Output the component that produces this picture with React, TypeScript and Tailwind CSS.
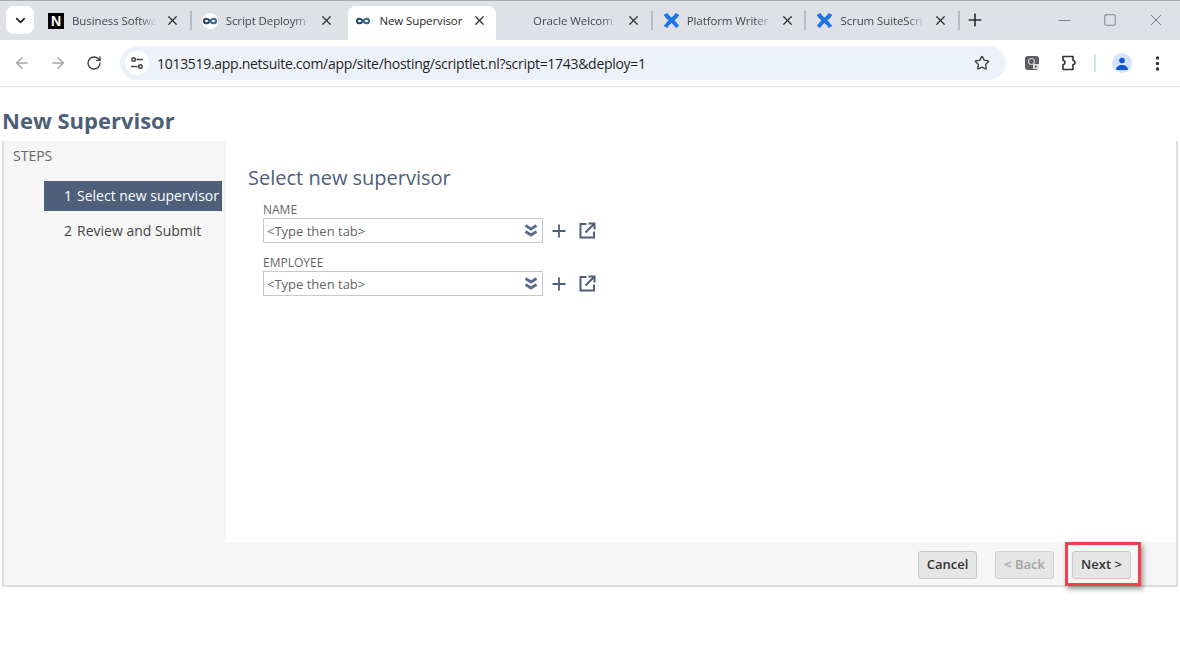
import { ArrowLeft, ArrowRight, ChevronDown, Minus, MoreVertical, Plus, RotateCw, Square, Star, X } from "lucide-react";

const sans = "font-['Open_Sans',sans-serif]";

function NetsuiteIcon() {
  return (
    <svg width="16" height="16" viewBox="0 0 16 16" fill="none">
      <circle cx="8" cy="8" r="8" fill="#fff" />
      <path d="M8 8C6.800 6.400 5.600 5.700 4.400 5.700 3 5.700 2 6.700 2 8s1 2.300 2.400 2.300c1.200 0 2.400-.7 3.600-2.300z" stroke="#28465f" strokeWidth="2.100" />
      <path d="M8 8c1.200-1.600 2.400-2.300 3.600-2.300C13 5.700 14 6.700 14 8s-1 2.300-2.400 2.300C10.400 10.300 9.200 9.600 8 8z" stroke="#3a678a" strokeWidth="2.100" />
    </svg>
  );
}

function ConfluenceIcon() {
  return (
    <svg width="17" height="17" viewBox="0 0 17 17" fill="none" stroke="#1d74e6" strokeWidth="4">
      <path d="M2.500 2C5 7 10.500 8.500 14.500 15" />
      <path d="M14.500 2C12 7 6.500 8.500 2.500 15" />
    </svg>
  );
}

function NotionIcon() {
  return (
    <div className="flex h-4 w-4 items-center justify-center bg-black font-['Liberation_Sans',sans-serif] text-[14px] font-bold leading-none text-white">
      N
    </div>
  );
}

const tabs = [
  { title: "Business Softwa", icon: <NotionIcon /> },
  { title: "Script Deploym", icon: <NetsuiteIcon /> },
  { title: "New Supervisor", icon: <NetsuiteIcon />, active: true },
  { title: "Oracle Welcom", icon: <div className="h-4 w-4" /> },
  { title: "Platform Writer", icon: <ConfluenceIcon /> },
  { title: "Scrum SuiteScri", icon: <ConfluenceIcon /> },
];

function TabStrip() {
  return (
    <div className="flex h-10 shrink-0 items-end border-t border-t-[#a9abad] bg-[#dee1e6] pl-[6px]">
      <div className="mb-[6px] mr-1 flex h-7 w-7 items-center justify-center rounded-lg bg-white">
        <ChevronDown size={15} strokeWidth={2.6} className="text-[#1f1f1f]" />
      </div>
      {tabs.map((tab, i) => (
        <div key={tab.title} className="relative flex h-[34px] w-[153.7px] items-center pb-[5px]">
          {tab.active && <div className="absolute inset-y-0 left-[3px] right-[3px] rounded-t-lg bg-white" />}
          <div className="relative ml-[10px] flex w-[17px] shrink-0 items-center">{tab.icon}</div>
          <div
            className={`relative ml-[7px] w-[85px] whitespace-nowrap ${sans} text-[11.5px] tracking-[-0.1px] ${
              tab.active ? "text-[#1f1f1f]" : "text-[#45474a] [mask-image:linear-gradient(90deg,#000_80%,transparent)]"
            }`}
          >
            {tab.title}
          </div>
          <X size={15} strokeWidth={2} className="relative ml-[8px] shrink-0 text-[#303134]" />
          {!tab.active && i !== 1 && <div className="absolute right-0 top-[5px] h-[19px] w-[2px] bg-[#b9bcc1]" />}
        </div>
      ))}
      <div className="mb-[6px] ml-px flex h-7 w-7 items-center justify-center">
        <Plus size={20} strokeWidth={2} className="text-[#303134]" />
      </div>
      <div className="mb-[6px] ml-[66px] flex h-7 items-center gap-[29px] text-[#6f7175]">
        <Minus size={19} strokeWidth={1.1} />
        <Square size={14} strokeWidth={1.4} />
        <X size={20} strokeWidth={1.1} />
      </div>
    </div>
  );
}

function Toolbar() {
  return (
    <div className="flex h-[47px] shrink-0 items-center border-b border-[#dcdcdc] bg-white pl-[13px]">
      <ArrowLeft size={18} strokeWidth={1.8} className="text-[#a6a7a9]" />
      <ArrowRight size={18} strokeWidth={1.8} className="ml-[18px] text-[#a6a7a9]" />
      <RotateCw size={16} strokeWidth={2} className="ml-[19px] text-[#3c3e41]" />
      <div className="ml-[18px] flex h-[34px] w-[886px] items-center rounded-full bg-[#edf2fa] pl-[5px]">
        <div className="flex h-6 w-6 items-center justify-center rounded-full bg-white">
          <svg width="14" height="14" viewBox="0 0 14 14" fill="none" stroke="#3c3e41" strokeWidth="1.4">
            <circle cx="3.600" cy="3.500" r="1.800" />
            <path d="M6.500 3.500h6.500" />
            <circle cx="10.400" cy="10.500" r="1.800" />
            <path d="M1 10.500h6.500" />
          </svg>
        </div>
        <div className={`ml-2 flex-1 ${sans} text-[14px] tracking-[-0.295px] text-[#1f1f1f]`}>
          1013519.app.netsuite.com/app/site/hosting/scriptlet.nl?script=1743&amp;deploy=1
        </div>
        <Star size={16} strokeWidth={2} className="mr-4 text-[#3c3e41]" />
      </div>
      <svg width="16" height="16" viewBox="0 0 16 16" className="ml-[18px]">
        <rect x="1" y="1" width="14" height="14" rx="3" fill="#5b5d60" />
        <circle cx="7.500" cy="6.500" r="3" fill="none" stroke="#c9c9c9" strokeWidth="1.200" />
        <rect x="9" y="9" width="6" height="5" fill="#e4e4e4" />
        <path d="M11 10l2.500 1.500L11 13z" fill="#5b5d60" />
      </svg>
      <svg width="18" height="18" viewBox="0 0 18 18" fill="none" stroke="#303134" strokeWidth="1.600" className="ml-[20px]">
        <path d="M3 2.500H13V6.500a2 2 0 0 1 0 4V15.500H3V10.500a2 2 0 0 0 0-4z" strokeLinejoin="round" />
      </svg>
      <div className="ml-[16px] h-[18px] w-[2px] bg-[#d3e3fd]" />
      <div className="ml-[16px] flex h-5 w-5 items-center justify-center rounded-full bg-[#d3e3fd]">
        <svg width="12" height="13" viewBox="0 0 12 13" fill="#0b57d0">
          <circle cx="6" cy="3.500" r="2.800" />
          <path d="M0 13c0-3 2.500-5 6-5s6 2 6 5z" />
        </svg>
      </div>
      <MoreVertical size={19} strokeWidth={2.4} className="ml-4 text-[#303134]" />
    </div>
  );
}

function Field({ label }: { label: string }) {
  return (
    <div>
      <div className={`${sans} mb-[2px] text-[12px] leading-[13px] text-[#666]`}>{label}</div>
      <div className="flex items-center">
        <div className="flex h-[25px] w-[280px] items-center border border-[#c8c8c8] bg-white pl-[3px] pr-[4px]">
          <span className={`flex-1 pt-[2px] ${sans} text-[13px] text-[#666]`}>&lt;Type then tab&gt;</span>
          <svg width="14" height="14" viewBox="0 0 14 14" fill="none" stroke="#5a6f90" strokeWidth="2.800">
            <path d="M1.500 1.500L7 5l5.500-3.500" />
            <path d="M1.500 7.500L7 11l5.500-3.500" />
          </svg>
        </div>
        <Plus size={20} strokeWidth={2.2} className="ml-[6px] text-[#4d5f79]" />
        <svg width="17" height="17" viewBox="0 0 17 17" fill="none" stroke="#4d5f79" strokeWidth="2" className="ml-[10px]">
          <path d="M7.500 2H1.500v13.500H15V9.500" />
          <path d="M6.500 10.500L15 2M9.500 1.500h6v6" />
        </svg>
      </div>
    </div>
  );
}

function WizardPanel() {
  return (
    <div className="relative mx-[2px] flex h-[446px] flex-col border-x-2 border-b-2 border-[#dedede] bg-[#f6f6f6]">
      <div className="flex flex-1">
        <div className="w-[222px] shrink-0 pl-[9px] pt-[6px]">
          <div className={`${sans} text-[14px] leading-[18px] text-[#666]`}>STEPS</div>
          <div className="ml-[31px] mt-[16px] w-[178px]">
            <div className={`flex h-[30px] items-center whitespace-nowrap bg-[#4d5f79] pb-[2px] pl-[20px] ${sans} text-[14px] text-white`}>
              <span className="mr-[5px]">1</span> Select new supervisor
            </div>
            <div className={`mt-[5px] flex h-[30px] items-center whitespace-nowrap pb-[2px] pl-[20px] ${sans} text-[14px] text-[#444]`}>
              <span className="mr-[5px]">2</span> Review and Submit
            </div>
          </div>
        </div>
        <div className="flex-1 bg-white pl-[22px] pt-[23px]">
          <div className={`${sans} text-[20px] leading-[28px] text-[#4d5f79]`}>Select new supervisor</div>
          <div className="ml-[15px] mt-[11px] flex flex-col gap-[13px]">
            <Field label="NAME" />
            <Field label="EMPLOYEE" />
          </div>
        </div>
      </div>
      <div className="flex h-[43px] shrink-0 items-center justify-end gap-[18px] pr-[45px] pt-[2px]">
        <button className={`h-7 w-[59px] rounded-[3px] border border-[#c8c8c8] bg-[#e5e5e5] pt-px ${sans} text-[13px] font-semibold text-[#333]`}>Cancel</button>
        <button className={`h-7 w-[59px] rounded-[3px] border border-[#d0d0d0] bg-[#e5e5e5] pt-px ${sans} text-[13px] font-semibold text-[#a3a3a3]`}>&lt; Back</button>
        <button className={`h-7 w-[59px] rounded-[3px] border border-[#c8c8c8] bg-[#e5e5e5] pt-px ${sans} text-[13px] font-semibold text-[#333]`}>Next &gt;</button>
      </div>
      {/* red callout drawn over the Next button */}
      <div className="absolute bottom-[-1px] right-[35px] h-[44px] w-[76px] border-[3px] border-[#f0404c] shadow-[2px_3px_5px_rgba(0,0,0,0.4)]" />
    </div>
  );
}

export default function App() {
  return (
    <div className="flex h-[651px] w-[1180px] flex-col overflow-hidden bg-white">
      <TabStrip />
      <Toolbar />
      <div className={`h-[54px] shrink-0 pl-[2px] pt-[18px] ${sans} text-[22px] font-bold leading-[30px] text-[#4d5f79]`}>New Supervisor</div>
      <WizardPanel />
    </div>
  );
}
